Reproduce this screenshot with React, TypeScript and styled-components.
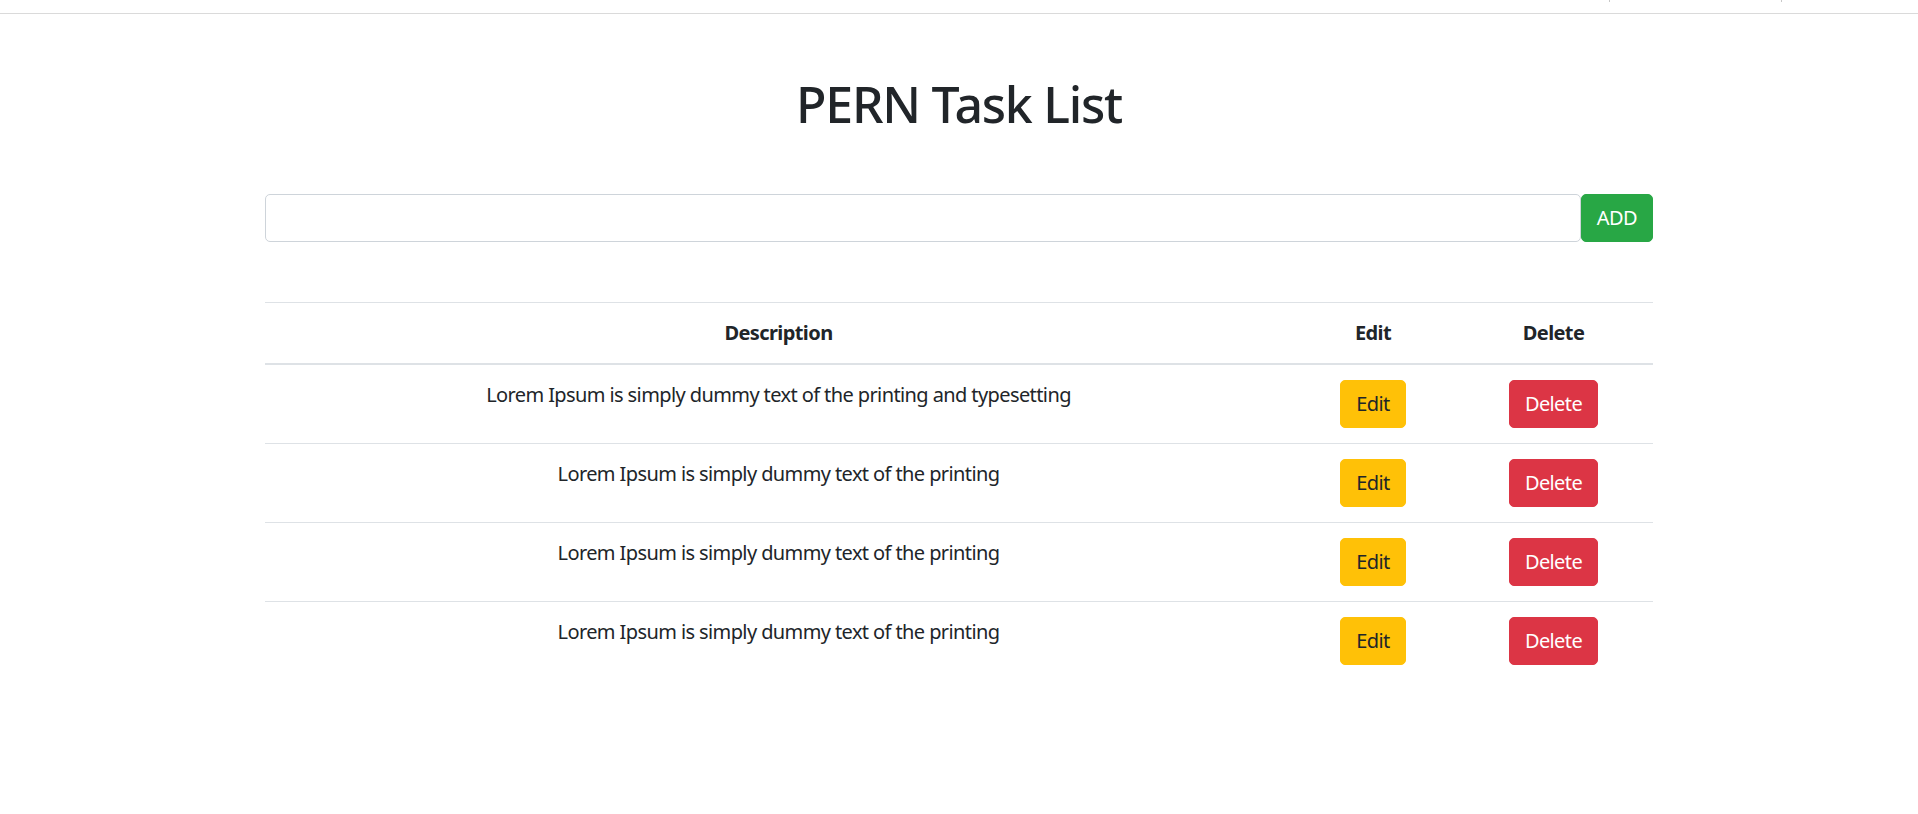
import styled, { createGlobalStyle } from "styled-components"

const GlobalStyle = createGlobalStyle`
body {
    margin: 0;
    background: #fff;
    color: #212529;
    font-family: "Noto Sans", "Open Sans", sans-serif;
    font-size: 20px;
    line-height: 1.5;
    letter-spacing: -0.03em;
}
* {
    box-sizing: border-box;
}
`

const TopBar = styled.div`
height: 14px;
border-bottom: 1px solid #dadada;
position: relative;
`

const Tick = styled.span<{ left: number }>`
position: absolute;
top: 0;
left: ${props => props.left}px;
width: 1px;
height: 2px;
background: #c8c8c8;
`

const Container = styled.div`
width: 1388px;
margin: 0 auto;
`

const Titulo = styled.h1`
margin: 60px 0 10px;
text-align: center;
font-size: 50px;
font-weight: 500;
line-height: 1.2;
letter-spacing: -0.025em;
`

const Formulario = styled.form`
display: flex;
margin-top: 60px;
`

const Campo = styled.input`
flex: 1;
height: 48px;
padding: 7px 15px;
border: 1px solid #ced4da;
border-radius: 5px;
font-family: inherit;
font-size: 20px;
color: #495057;
outline: none;
`

const Botao = styled.button<{ cor: string, texto: string }>`
height: 48px;
padding: 7px 15px;
border: 1px solid ${props => props.cor};
border-radius: 5px;
background: ${props => props.cor};
color: ${props => props.texto};
font-family: inherit;
font-size: 20px;
line-height: 1.5;
letter-spacing: -0.03em;
cursor: pointer;
`

const Tabela = styled.table`
width: 100%;
margin-top: 60px;
border-collapse: collapse;
text-align: center;
`

const Cabecalho = styled.th<{ largura?: number }>`
width: ${props => props.largura ? props.largura + 'px' : 'auto'};
padding: 15px;
border-top: 1px solid #dee2e6;
border-bottom: 2px solid #dee2e6;
font-weight: 700;
vertical-align: bottom;
`

const Celula = styled.td`
padding: 15px;
border-top: 1px solid #dee2e6;
vertical-align: top;
`

const Linha = styled.tr`
&:first-child td {
    border-top: none;
}
`

const tarefas = [
    'Lorem Ipsum is simply dummy text of the printing and typesetting',
    'Lorem Ipsum is simply dummy text of the printing',
    'Lorem Ipsum is simply dummy text of the printing',
    'Lorem Ipsum is simply dummy text of the printing',
]

export default function App() {
    return (
        <>
            <GlobalStyle />
            <TopBar>
                <Tick left={1609} />
                <Tick left={1781} />
            </TopBar>
            <Container>
                <Titulo>PERN Task List</Titulo>
                <Formulario onSubmit={e => e.preventDefault()}>
                    <Campo type="text" />
                    <Botao cor="#28a745" texto="#fff">ADD</Botao>
                </Formulario>
                <Tabela>
                    <thead>
                        <tr>
                            <Cabecalho>Description</Cabecalho>
                            <Cabecalho largura={162}>Edit</Cabecalho>
                            <Cabecalho largura={199}>Delete</Cabecalho>
                        </tr>
                    </thead>
                    <tbody>
                        {tarefas.map((tarefa, i) => (
                            <Linha key={i}>
                                <Celula>{tarefa}</Celula>
                                <Celula>
                                    <Botao cor="#ffc107" texto="#212529">Edit</Botao>
                                </Celula>
                                <Celula>
                                    <Botao cor="#dc3545" texto="#fff">Delete</Botao>
                                </Celula>
                            </Linha>
                        ))}
                    </tbody>
                </Tabela>
            </Container>
        </>
    )
}
